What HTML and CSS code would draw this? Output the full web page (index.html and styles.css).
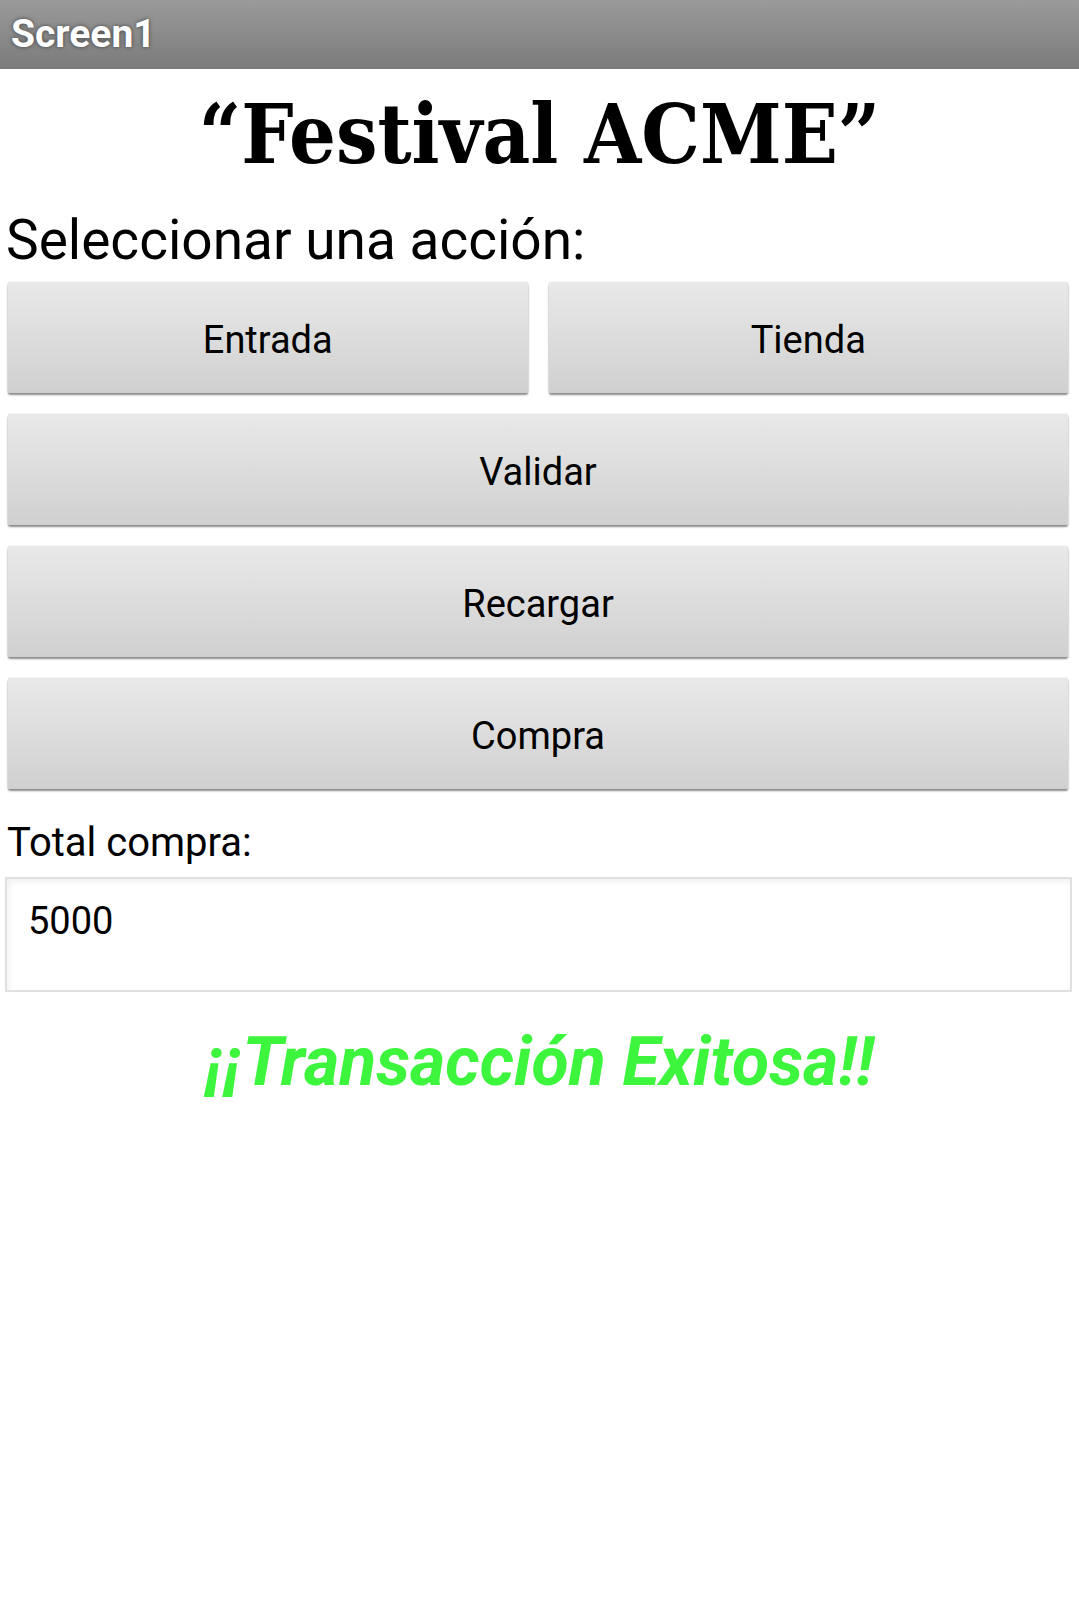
FILE: index.html
```html
<!DOCTYPE html>
<html lang="es">
<head>
<meta charset="utf-8">
<title>Screen1</title>
<link rel="stylesheet" href="styles.css">
</head>
<body>
<header class="titlebar">Screen1</header>
<main class="screen">
  <h1 class="title">“Festival ACME”</h1>
  <p class="prompt">Seleccionar una acción:</p>
  <div class="actions">
    <div class="row two">
      <button class="btn">Entrada</button>
      <button class="btn">Tienda</button>
    </div>
    <div class="row"><button class="btn">Validar</button></div>
    <div class="row"><button class="btn">Recargar</button></div>
    <div class="row"><button class="btn">Compra</button></div>
  </div>
  <p class="label">Total compra:</p>
  <div class="textbox">5000</div>
  <p class="status">¡¡Transacción Exitosa!!</p>
</main>
</body>
</html>
```
FILE: styles.css
```css
* { box-sizing: border-box; }
html, body { margin: 0; padding: 0; background: #fff; }
body { width: 1079px; font-family: Roboto, "Noto Sans", sans-serif; color: #000; }

.titlebar {
  height: 69px;
  background: linear-gradient(#9a9a9a, #7b7b7b);
  color: #fff;
  font-family: Roboto, sans-serif;
  font-weight: bold;
  font-size: 39px;
  line-height: 69px;
  padding-left: 11px;
  text-shadow: 0 0 4px rgba(0,0,0,0.55);
}

.screen { display: flex; flex-direction: column; }

.title {
  margin: 24px 0 0 0;
  font-family: "DejaVu Serif Condensed", "DejaVu Serif", serif;
  font-stretch: condensed;
  font-weight: bold;
  font-size: 82px;
  line-height: 82px;
  text-align: center;
}

.prompt {
  margin: 38px 0 0 6px;
  font-size: 55px;
  line-height: 55px;
}

.actions {
  margin-top: 14px;
  padding: 0 11px 0 8px;
  display: flex;
  flex-direction: column;
  gap: 21px;
}
.row { display: flex; }
.row.two { display: grid; grid-template-columns: 1fr 1fr; gap: 21px; }

.btn {
  width: 100%;
  height: 111px;
  border: none;
  border-radius: 2px;
  background: linear-gradient(#e9e9e9, #d0d0d0);
  box-shadow: 0 2px 2px rgba(0,0,0,0.45), 0 0 1px rgba(0,0,0,0.3);
  font-family: Roboto, sans-serif;
  font-size: 38px;
  color: #000;
  padding: 4px 0 0 0;
}

.label {
  margin: 34px 0 0 7px;
  font-size: 40px;
  line-height: 40px;
}

.textbox {
  margin: 14px 7px 0 5px;
  height: 115px;
  border: 2px solid #e0e0e0;
  box-shadow: inset 2px 3px 6px rgba(0,0,0,0.06);
  padding: 23px 0 0 21px;
  font-size: 38px;
  line-height: 38px;
}

.status {
  margin: 36px 0 0 0;
  text-align: center;
  font-weight: bold;
  font-style: italic;
  font-size: 68px;
  line-height: 69px;
  color: #3cf53c;
}
```
